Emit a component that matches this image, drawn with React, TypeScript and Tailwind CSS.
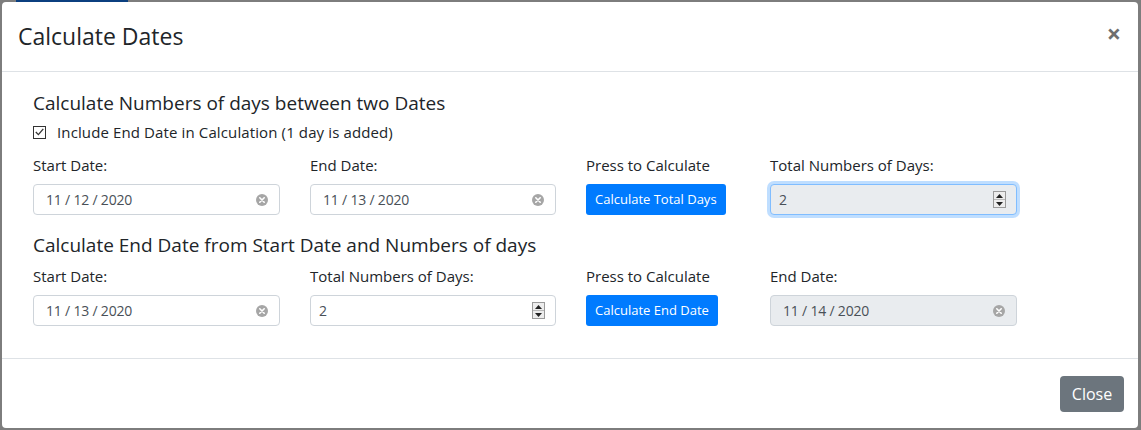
import { useState } from 'react';

const font = { fontFamily: '"Open Sans", "Noto Sans", sans-serif' };

function ClearIcon() {
  return (
    <svg width="12" height="12" viewBox="0 0 12 12" className="shrink-0">
      <circle cx="6" cy="6" r="6" fill="#a6a6a6" />
      <path d="M3.8 3.8 L8.2 8.2 M8.2 3.8 L3.8 8.2" stroke="#fff" strokeWidth="1.6" strokeLinecap="round" />
    </svg>
  );
}

function Spinner() {
  return (
    <div className="flex flex-col w-[13px] h-[17px] border border-[#9a9a9a] bg-[#ededed] shrink-0">
      <div className="flex-1 flex items-center justify-center border-b border-[#b8b8b8]">
        <svg width="7" height="4" viewBox="0 0 7 4"><path d="M0 4 L3.5 0 L7 4 Z" fill="#222" /></svg>
      </div>
      <div className="flex-1 flex items-center justify-center">
        <svg width="7" height="4" viewBox="0 0 7 4"><path d="M0 0 L3.5 4 L7 0 Z" fill="#222" /></svg>
      </div>
    </div>
  );
}

function DateField({ value, disabled }: { value: string; disabled?: boolean }) {
  return (
    <div
      className={`h-[31px] flex items-center justify-between pl-[12px] pr-[11px] border border-[#ced4da] rounded-[4px] text-[14px] text-[#495057] ${
        disabled ? 'bg-[#e9ecef]' : 'bg-white'
      }`}
    >
      <span className="tracking-[-0.2px]">{value}</span>
      <ClearIcon />
    </div>
  );
}

function NumberField({ value, disabled, focused }: { value: string; disabled?: boolean; focused?: boolean }) {
  return (
    <div
      className={`h-[31px] flex items-center justify-between pl-[8px] pr-[10px] border rounded-[4px] text-[14px] text-[#495057] ${
        disabled ? 'bg-[#e9ecef]' : 'bg-white'
      } ${focused ? 'border-[#80bdff] shadow-[0_0_0_3px_rgba(0,123,255,0.25)]' : 'border-[#ced4da]'}`}
    >
      <span>{value}</span>
      <Spinner />
    </div>
  );
}

function Label({ children }: { children: React.ReactNode }) {
  return <div className="h-[22px] leading-[22px] text-[15px] text-[#212529]">{children}</div>;
}

function BlueButton({ children }: { children: React.ReactNode }) {
  return (
    <div className="flex">
      <button className="h-[31px] px-[9px] bg-[#007bff] text-white text-[13px] rounded-[3px]">{children}</button>
    </div>
  );
}

export default function App() {
  const [include, setInclude] = useState(true);

  return (
    <div className="w-[1141px] h-[430px] bg-[#7d7d7d] flex flex-col overflow-hidden" style={font}>
      <div className="h-[2px] flex shrink-0">
        <div className="ml-[16px] w-[112px] bg-[#0b3f7f]" />
      </div>
      <div className="flex-1 ml-[2px] mr-[3px] mb-[2px] bg-white rounded-[4px] flex flex-col">
        {/* header */}
        <div className="h-[70px] border-b border-[#dee2e6] flex items-center justify-between pl-[16px] pr-[17px] shrink-0">
          <h4 className="text-[23px] text-[#212529] leading-none">Calculate Dates</h4>
          <button className="text-[#6f6f6f] text-[25px] font-bold leading-none -mt-[6px]">×</button>
        </div>

        {/* body */}
        <div className="pl-[31px] pt-[19px] pb-[32px] border-b border-[#dee2e6] flex flex-col">
          <h5 className="h-[24px] leading-[24px] text-[19px] text-[#212529]">Calculate Numbers of days between two Dates</h5>
          <label className="mt-[6px] h-[22px] flex items-center gap-[11px] text-[15px] tracking-[0.12px] text-[#212529] cursor-pointer">
            <span
              onClick={() => setInclude(!include)}
              className="w-[13px] h-[13px] border border-[#333] flex items-center justify-center bg-white"
            >
              {include && (
                <svg width="9" height="8" viewBox="0 0 9 8">
                  <path d="M0.8 4 L3.4 6.6 L8.3 0.8" stroke="#333" strokeWidth="1.3" fill="none" />
                </svg>
              )}
            </span>
            Include End Date in Calculation (1 day is added)
          </label>

          <div className="mt-[11px] grid grid-cols-[247px_246px_154px_247px] gap-x-[30px] gap-y-[8px]">
            <Label>Start Date:</Label>
            <Label>End Date:</Label>
            <Label>Press to Calculate</Label>
            <Label>Total Numbers of Days:</Label>
            <DateField value="11 / 12 / 2020" />
            <DateField value="11 / 13 / 2020" />
            <BlueButton>Calculate Total Days</BlueButton>
            <NumberField value="2" disabled focused />
          </div>

          <h5 className="mt-[18px] h-[24px] leading-[24px] text-[19px] text-[#212529]">
            Calculate End Date from Start Date and Numbers of days
          </h5>

          <div className="mt-[8px] grid grid-cols-[247px_246px_154px_247px] gap-x-[30px] gap-y-[8px]">
            <Label>Start Date:</Label>
            <Label>Total Numbers of Days:</Label>
            <Label>Press to Calculate</Label>
            <Label>End Date:</Label>
            <DateField value="11 / 13 / 2020" />
            <NumberField value="2" />
            <BlueButton>Calculate End Date</BlueButton>
            <DateField value="11 / 14 / 2020" disabled />
          </div>
        </div>

        {/* footer */}
        <div className="flex-1 flex items-center justify-end pr-[14px] pt-[1px]">
          <button className="w-[64px] h-[36px] bg-[#6c757d] text-white text-[16px] rounded-[4px]">Close</button>
        </div>
      </div>
    </div>
  );
}
